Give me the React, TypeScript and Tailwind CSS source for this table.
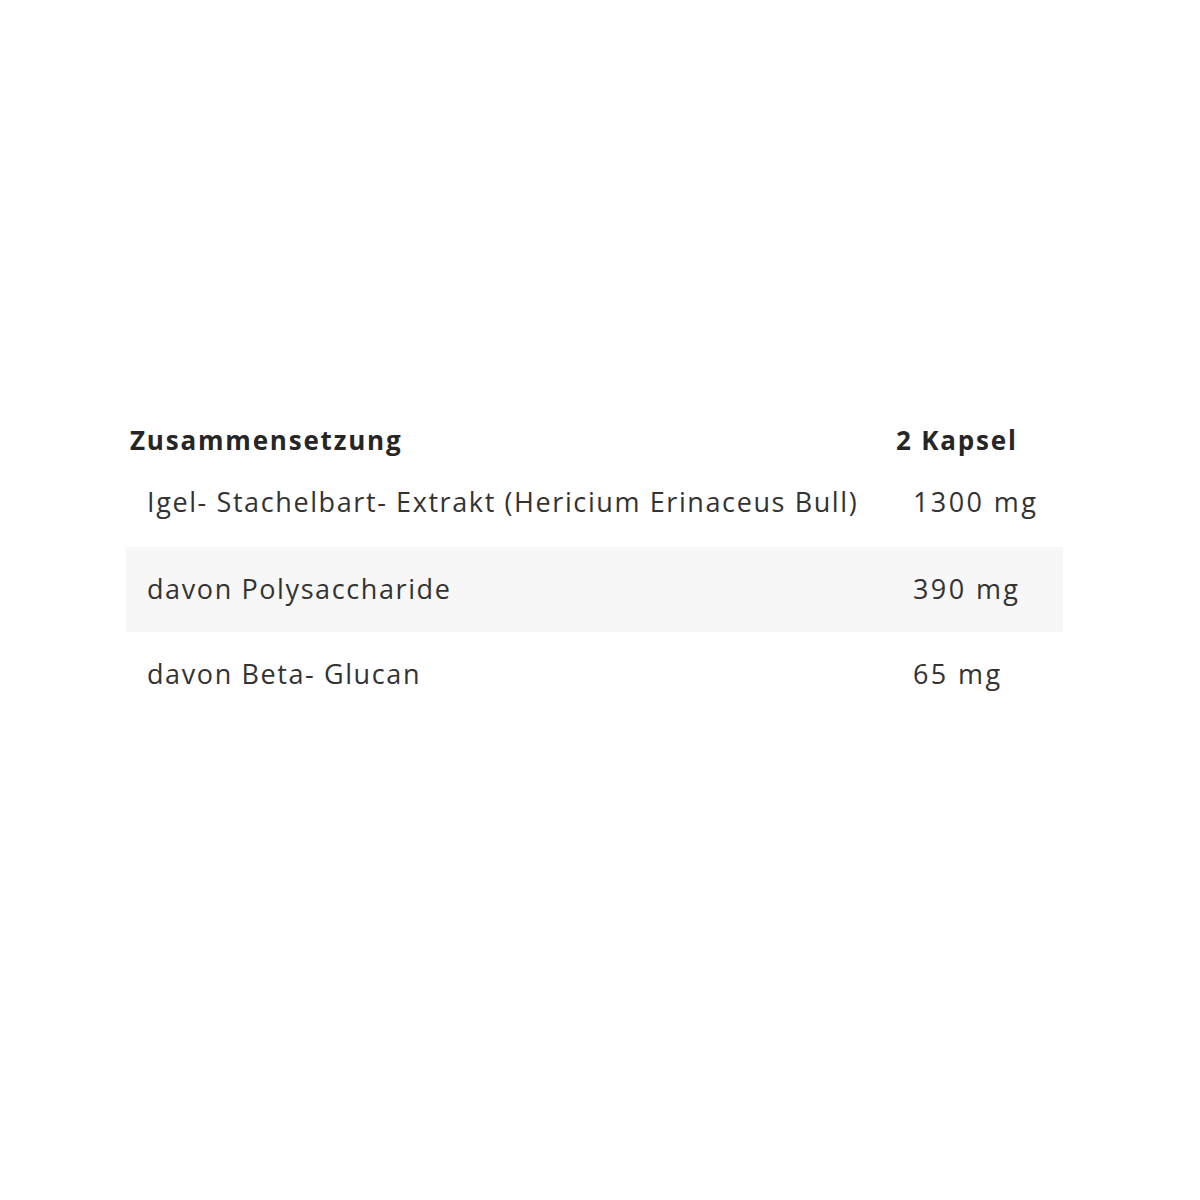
export default function App() {
  const rows = [
    { name: "Igel- Stachelbart- Extrakt (Hericium Erinaceus Bull)", val: "1300 mg" },
    { name: "davon Polysaccharide", val: "390 mg" },
    { name: "davon Beta- Glucan", val: "65 mg" },
  ];
  return (
    <div className="w-[1200px] h-[1200px] bg-white" style={{ fontFamily: "'Open Sans', Lato, sans-serif" }}>
      <div className="pt-[410px] pl-[126px]">
        <div className="w-[937px]">
          <div className="flex h-[60px] items-center text-[26px] font-bold text-[#262626] tracking-[1.8px]">
            <div className="w-[766px] pl-[4px]">Zusammensetzung</div>
            <div className="pl-[4px]">2 Kapsel</div>
          </div>
          {rows.map((r, i) => (
            <div
              key={i}
              className={`flex items-center text-[27px] text-[#333333] ${i === 0 ? "h-[77px] pb-[12px]" : "h-[85px]"} ${i === 1 ? "bg-[#f7f7f7]" : ""}`}
            >
              <div className="w-[766px] pl-[21px] tracking-[1.6px]">{r.name}</div>
              <div className="pl-[21px] tracking-[2.4px]">{r.val}</div>
            </div>
          ))}
        </div>
      </div>
    </div>
  );
}
